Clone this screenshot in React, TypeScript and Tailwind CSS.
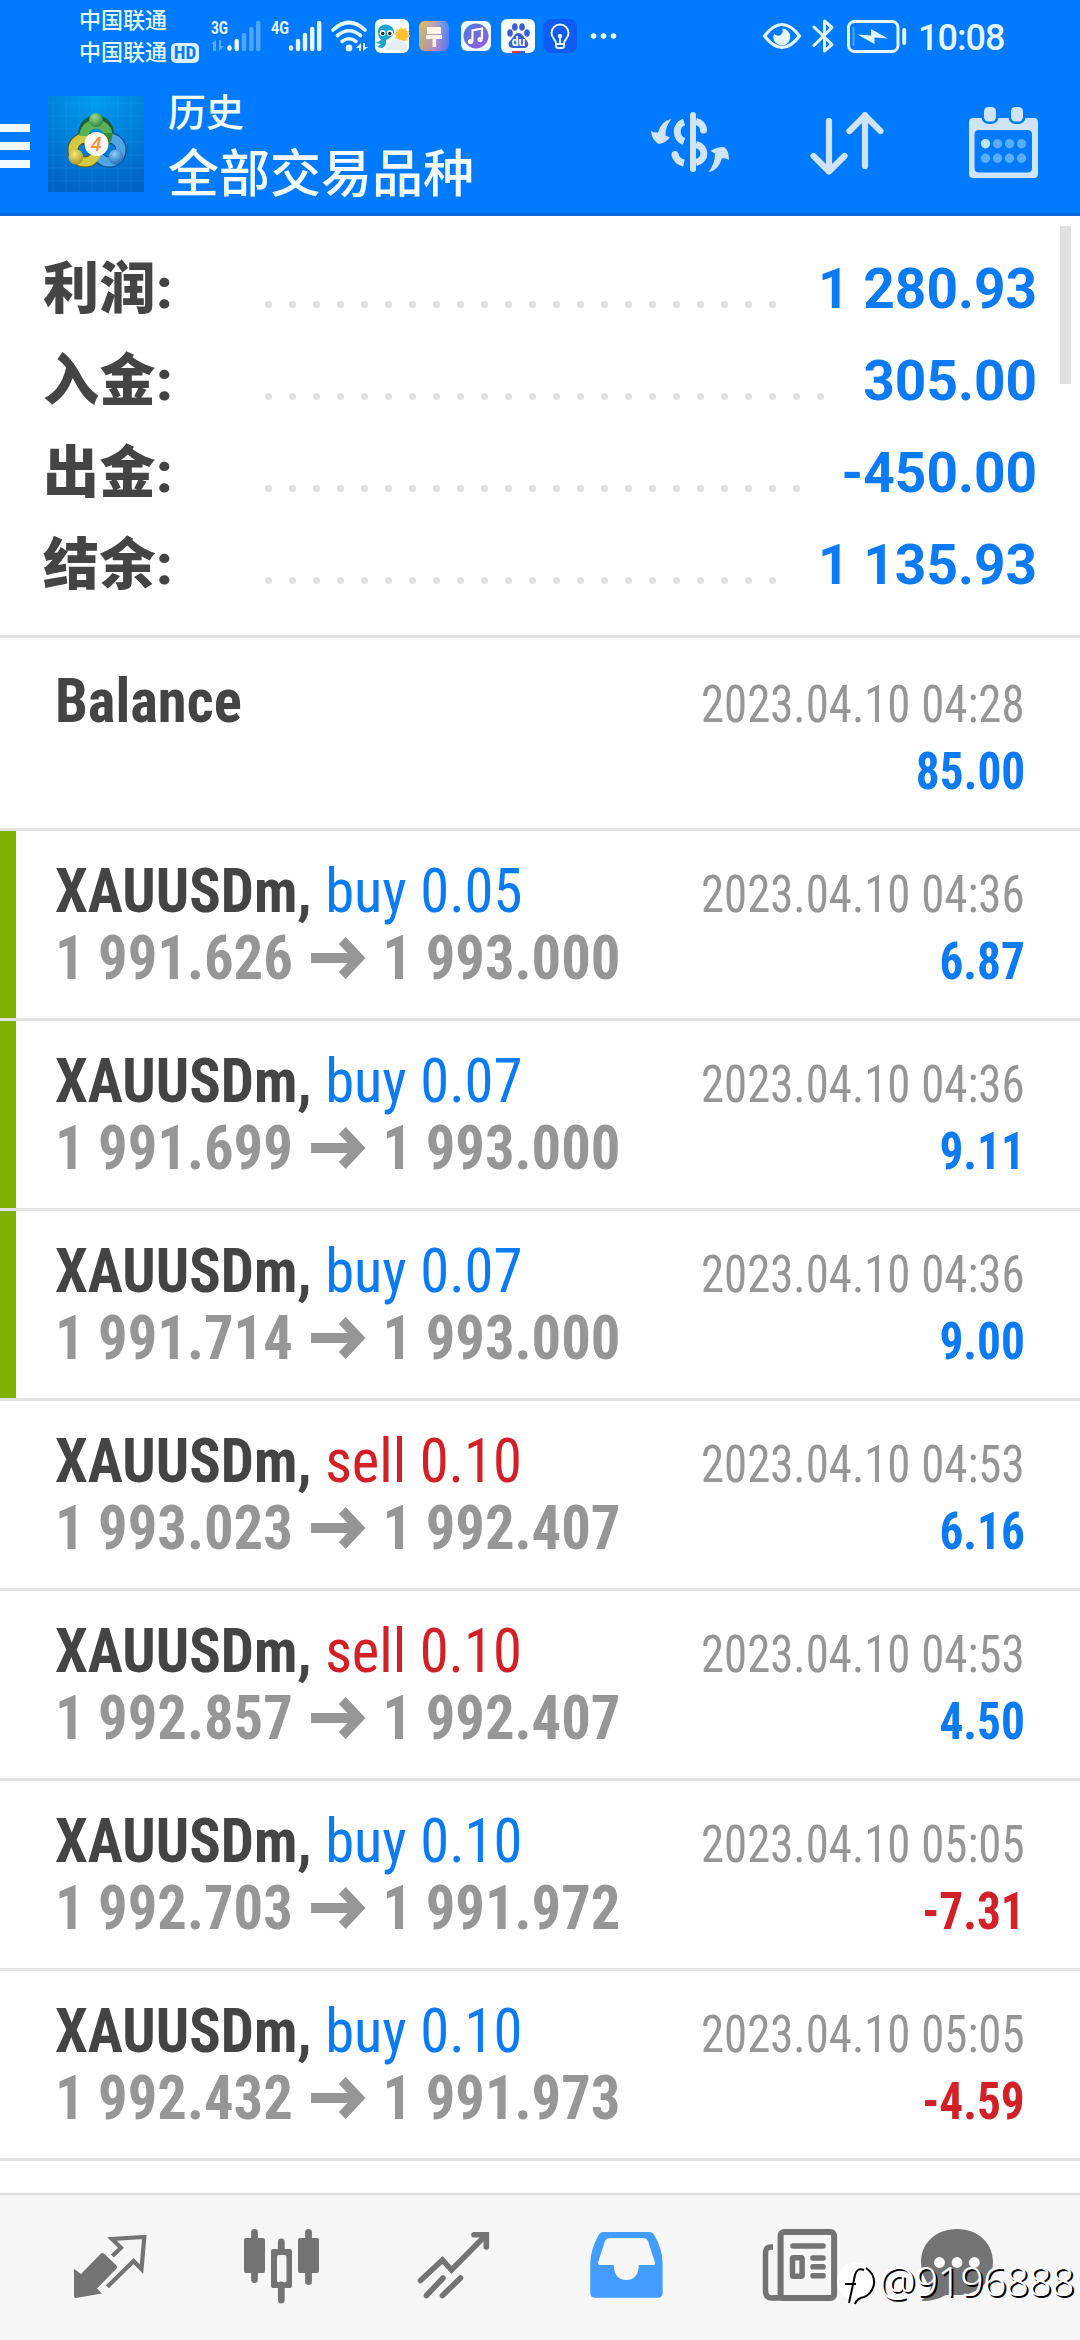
import { clsx } from "clsx";

type Deal = {
  symbol: string;
  side?: "buy" | "sell";
  volume?: string;
  open?: string;
  close?: string;
  time: string;
  profit: string;
  marked?: boolean;
};

const SUMMARY = [
  { label: "利润:", value: "1 280.93", dots: 22 },
  { label: "入金:", value: "305.00", dots: 24 },
  { label: "出金:", value: "-450.00", dots: 23 },
  { label: "结余:", value: "1 135.93", dots: 22 },
];

const DEALS: Deal[] = [
  { symbol: "XAUUSDm", side: "buy", volume: "0.05", open: "1 991.626", close: "1 993.000", time: "2023.04.10 04:36", profit: "6.87", marked: true },
  { symbol: "XAUUSDm", side: "buy", volume: "0.07", open: "1 991.699", close: "1 993.000", time: "2023.04.10 04:36", profit: "9.11", marked: true },
  { symbol: "XAUUSDm", side: "buy", volume: "0.07", open: "1 991.714", close: "1 993.000", time: "2023.04.10 04:36", profit: "9.00", marked: true },
  { symbol: "XAUUSDm", side: "sell", volume: "0.10", open: "1 993.023", close: "1 992.407", time: "2023.04.10 04:53", profit: "6.16" },
  { symbol: "XAUUSDm", side: "sell", volume: "0.10", open: "1 992.857", close: "1 992.407", time: "2023.04.10 04:53", profit: "4.50" },
  { symbol: "XAUUSDm", side: "buy", volume: "0.10", open: "1 992.703", close: "1 991.972", time: "2023.04.10 05:05", profit: "-7.31" },
  { symbol: "XAUUSDm", side: "buy", volume: "0.10", open: "1 992.432", close: "1 991.973", time: "2023.04.10 05:05", profit: "-4.59" },
];

export default function App() {
  return (
    <div className="relative flex h-[2340px] w-[1080px] flex-col overflow-hidden bg-white font-['Roboto','Noto_Sans_CJK_SC',sans-serif]">
      <header className="h-[216px] flex-none border-b-[3px] border-[#0a69d6] bg-[#007aff]">
        <StatusBar />
        <TitleBar />
      </header>

      <main className="relative flex-1 overflow-hidden">
        <section className="h-[422px] border-b-[3px] border-[#e3e3e3] pt-[27px] pr-[43px] pl-[43px]">
          {SUMMARY.map((s) => (
            <div key={s.label} className="flex h-[92px] items-baseline leading-[92px]">
              <span className="w-[222px] text-[56px] font-black tracking-[0.5px] text-[#444]">
                {s.label}
              </span>
              <span className="flex flex-1 gap-[17px]">
                {Array.from({ length: s.dots }, (_, i) => (
                  <i key={i} className="mb-px h-[7px] w-[7px] rounded-full bg-[#e0e0e0]" />
                ))}
              </span>
              <span className="text-[55px] font-bold whitespace-pre text-[#0a7af5]">
                {s.value}
              </span>
            </div>
          ))}
        </section>

        <div className="pt-[3px]">
          <DealRow
            deal={{ symbol: "Balance", time: "2023.04.10 04:28", profit: "85.00" }}
          />
          {DEALS.map((d, i) => (
            <DealRow key={i} deal={d} />
          ))}
        </div>

        <div className="absolute top-[10px] right-[9px] h-[158px] w-[11px] bg-[#e0e0e0]" />
      </main>

      <TabBar />
      <Watermark />
    </div>
  );
}

function DealRow({ deal }: { deal: Deal }) {
  const tone = deal.side === "sell" ? "text-[#d32026]" : "text-[#0a7af5]";
  return (
    <div className="flex h-[190px] border-b-[3px] border-[#e3e3e3] font-['Roboto_Condensed','Roboto',sans-serif] font-stretch-condensed">
      <div className={clsx("w-4 flex-none", deal.marked && "bg-[#80b000]")} />
      <div className="flex-1 pt-[26px] pr-[55px] pl-[39px] leading-[67px]">
        <div className="flex h-[67px] items-baseline justify-between">
          <p className="origin-left scale-x-[.945] text-[62px] whitespace-nowrap">
            <span className="font-bold text-[#444]">
              {deal.symbol}
              {deal.side && ","}
            </span>
            {deal.side && (
              <span className={tone}>
                {" "}
                {deal.side} {deal.volume}
              </span>
            )}
          </p>
          <p className="origin-right scale-x-[.9] text-[52px] text-[#969698]">{deal.time}</p>
        </div>
        <div className="flex h-[67px] items-baseline justify-between font-bold">
          <p className="flex origin-left scale-x-[.945] items-baseline text-[62px] text-[#969698]">
            {deal.open ? (
              <>
                <span>{deal.open}</span>
                <svg width="58" height="42" viewBox="0 0 58 42" className="mr-[18px] ml-[19px]">
                  <path d="M0 21H48M33 3.500L50.500 21L33 38.500" fill="none" stroke="currentColor" strokeWidth="10" />
                </svg>
                <span>{deal.close}</span>
              </>
            ) : (
              "\u00a0"
            )}
          </p>
          <p
            className={clsx(
              "origin-right scale-x-[.91] text-[52px]",
              deal.profit.startsWith("-") ? "text-[#d32026]" : "text-[#0a7af5]",
            )}
          >
            {deal.profit}
          </p>
        </div>
      </div>
    </div>
  );
}

function StatusBar() {
  return (
    <div className="flex h-[72px] pl-[79px] text-[#e6f6ff]">
      <div className="w-[125px] pt-[5px] text-[22px] leading-[32px] font-medium">
        <p>中国联通</p>
        <p className="flex items-center gap-1">
          中国联通
          <span className="flex h-5 w-7 items-center justify-center rounded-[5px] bg-[#d8f0ff] font-['Roboto_Condensed'] text-[19px] font-bold text-[#007aff]">
            HD
          </span>
        </p>
      </div>
      <svg width="168" height="72" viewBox="204 0 168 72" fill="currentColor">
        <text x="211" y="34" fontSize="19" fontWeight="700" textLength="17" lengthAdjust="spacingAndGlyphs">3G</text>
        <text x="271" y="34" fontSize="19" fontWeight="700" textLength="18" lengthAdjust="spacingAndGlyphs">4G</text>
        <g stroke="currentColor" strokeWidth="4.4" strokeLinecap="round">
          <path d="M229.5 47.5v1M236.7 41v8" />
          <path d="M244 35v14M251.4 29v20M258.3 23v26" opacity=".35" />
          <path d="M291 47.5v1M298 41v8M305 35v14M312.2 29v20M319.2 23v26" />
        </g>
        <path d="M211 44l5-4v11h-3v-7zM219 40v11l5-5h-3v-6z" opacity=".4" />
        <g fill="none" stroke="currentColor" strokeWidth="3.6" strokeLinecap="round">
          <path d="M333 30Q349 15 365 30M337.500 35.500Q349 26 360.500 35.500M342 41.500Q349 36 356 41.500" />
        </g>
        <circle cx="349" cy="48" r="3.4" />
        <path d="M356 48l5-5v8h-2v-3zM363 43v8l5-4h-3v-4z" />
      </svg>
      <svg width="248" height="72" viewBox="372 0 248 72">
        <defs>
          <linearGradient id="theme" x1="0" y1="0" x2="1" y2="0">
            <stop offset="0" stopColor="#fba030" />
            <stop offset=".5" stopColor="#e888b0" />
            <stop offset="1" stopColor="#4a7df8" />
          </linearGradient>
          <linearGradient id="themeTop" x1="0" y1="0" x2="1" y2="1">
            <stop offset="0" stopColor="#f7c948" stopOpacity=".7" />
            <stop offset=".4" stopColor="#5cc6e8" stopOpacity=".35" />
            <stop offset="1" stopColor="#5a60f0" stopOpacity=".3" />
          </linearGradient>
          <linearGradient id="music" x1="0" y1="0" x2="1" y2="1">
            <stop offset="0" stopColor="#4a7ed8" />
            <stop offset="1" stopColor="#9a5ae0" />
          </linearGradient>
        </defs>
        {/* weather */}
        <rect x="375" y="19" width="34" height="34" rx="6" fill="#f4fcff" />
        <circle cx="402" cy="35" r="6.500" fill="#fbc02d" stroke="#f7cf6a" strokeWidth="2.500" strokeDasharray="2 2" />
        <path d="M378 33a8 7 0 1 1 14 3q-3 3-6 4q1 6-4 8l-5-1l4-3l-5-1l5-3q-3-3-3-7z" fill="#1fa3d0" />
        <path d="M386 50q-1-7 5-7q3-7 9-3q6 0 7 6q0 4-3 4z" fill="#e6eef5" />
        <circle cx="382.500" cy="33" r="3" fill="#fff" />
        <circle cx="390" cy="33" r="3" fill="#fff" />
        <circle cx="382.800" cy="33.500" r="1.700" fill="#123" />
        <circle cx="389.800" cy="33.500" r="1.700" fill="#123" />
        {/* themes */}
        <rect x="419" y="21" width="30" height="30" rx="6" fill="url(#theme)" />
        <rect x="419" y="21" width="30" height="30" rx="6" fill="url(#themeTop)" />
        <path d="M427 27h14v7h-14zM426 35h16v4h-6v8h-3.500v-8h-6.500z" fill="#fff4e8" />
        {/* music */}
        <rect x="461" y="21" width="30" height="30" rx="6" fill="#eefaff" />
        <circle cx="476" cy="36" r="12.500" fill="url(#music)" />
        <path d="M472.500 41.500v-11l9.500-2v10.500" fill="none" stroke="#fff" strokeWidth="2.200" />
        <circle cx="470.500" cy="41.500" r="2.600" fill="#fff" />
        <circle cx="480" cy="39.500" r="2.600" fill="#fff" />
        {/* baidu */}
        <rect x="501" y="19" width="34" height="34" rx="6" fill="#f4fcff" />
        <g fill="#3c5fd0">
          <ellipse cx="510" cy="33" rx="2.800" ry="3.800" />
          <ellipse cx="514.800" cy="27" rx="2.800" ry="3.800" />
          <ellipse cx="522" cy="27" rx="2.800" ry="3.800" />
          <ellipse cx="527" cy="33" rx="2.800" ry="3.800" />
          <path d="M518.500 33c4 0 6 5 8.500 8s1 7-3 7h-11c-4 0-6-4-3-7s4.500-8 8.500-8z" />
        </g>
        <text x="518.500" y="46" fontSize="12" fontWeight="700" textAnchor="middle" fill="#fff">du</text>
        <path d="M512 51h7v2h-7z" fill="#e0304a" />
        <path d="M519 51h6v2h-6z" fill="#3c5fd0" />
        {/* bulb */}
        <rect x="543.500" y="19" width="33.500" height="34" rx="8" fill="#0f5bf3" />
        <g fill="none" stroke="#e6f6ff" strokeWidth="2">
          <path d="M556 43.500c0-4-4.500-5-4.500-10.500a8.500 8.500 0 0 1 17 0c0 5.500-4.500 6.500-4.500 10.500v2.500q0 2-2 2h-4q-2 0-2-2zM556 44h8M560 44v-8" />
        </g>
        <circle cx="560" cy="36" r="2.200" fill="#e6f6ff" />
        <g fill="#e6f6ff">
          <circle cx="593.500" cy="36" r="2.800" />
          <circle cx="603.500" cy="36" r="2.800" />
          <circle cx="613.500" cy="36" r="2.800" />
        </g>
      </svg>
      <svg width="150" height="72" viewBox="760 0 150 72" className="ml-[141px]" fill="none" stroke="currentColor">
        <path d="M763.500 36Q781 13 798.500 36Q781 59 763.500 36z" strokeWidth="3.200" />
        <path d="M781 28.500a8.500 8.500 0 1 1-8 5q4 4 7 1t1-6z" fill="currentColor" stroke="none" />
        <path d="M813 27L831 44.500L823.500 51V21L831 27.500L813 45.500" strokeWidth="3" strokeLinejoin="round" strokeLinecap="round" />
        <rect x="847.500" y="21.500" width="49.500" height="30" rx="6" strokeWidth="3" />
        <path d="M903.200 30v13" strokeWidth="4" strokeLinecap="round" />
        <path d="M852.500 27v19" strokeWidth="2" opacity=".35" />
        <path d="M856.500 34.500L870 35.500V29L887 38.500L873.500 37.500V44z" fill="currentColor" stroke="none" />
      </svg>
      <span className="ml-[7px] pt-[17px] text-[36px] leading-[42px] font-medium tracking-[-1px]">10:08</span>
    </div>
  );
}

function TitleBar() {
  return (
    <div className="flex h-[141px] text-[#cfe4fb]">
      <div className="flex w-[30px] flex-none flex-col gap-[10px] pt-[52px]">
        <span className="h-2 bg-[#f0faff]" />
        <span className="h-2 bg-[#f0faff]" />
        <span className="h-2 bg-[#f0faff]" />
      </div>
      <AppLogo />
      <div className="ml-[24px] w-[460px] font-medium text-[#f4fcff]">
        <p className="pt-[13px] text-[38px] leading-[56px]">历史</p>
        <p className="text-[51px] leading-[67px]">全部交易品种</p>
      </div>
      <svg width="82" height="141" viewBox="650 72 82 141" className="ml-[22px]">
        <g fill="none" stroke="currentColor" strokeWidth="7">
          <path d="M684 122C675 125 675 138 684 141.500" />
          <path d="M675 154.500C676 159 679 162 684 163" />
          <path d="M696 121.500C700.500 122.500 703.500 126 703.500 130" />
          <path d="M696 144.500C706.500 147 706.500 160 696 162.500" />
          <path d="M693 115v54" strokeWidth="6" strokeLinecap="round" />
        </g>
        <circle cx="675" cy="154.500" r="3.500" fill="currentColor" />
        <circle cx="703.500" cy="130" r="3.500" fill="currentColor" />
        <path d="M651 131Q655 133 658 132.500Q661 121 671.500 119Q665 127 665.500 135.500L670 137.500Q665 143 659 144Q652 141 651 131z" fill="currentColor" />
        <path d="M729 160Q725 157.500 722 158.500Q718 171 708.500 172Q715 164 715 153.500L710.500 151Q716 147 724 147Q729 150 729 160z" fill="currentColor" />
      </svg>
      <svg width="76" height="141" viewBox="808 72 76 141" className="ml-[77px]" fill="none" stroke="currentColor" strokeWidth="6.200" strokeLinecap="round" strokeLinejoin="round">
        <path d="M828 121v50M812.500 156L828 171.500L843.500 156" />
        <path d="M864 166v-51M848.500 131L864 115.500L879.500 131" />
      </svg>
      <svg width="72" height="141" viewBox="967 72 72 141" className="ml-[83px]">
        <path fillRule="evenodd" d="M972 118h61q4 0 4 4v52q0 4-4 4h-61q-4 0-4-4v-52q0-4 4-4zM978 130q-4.500 0-4.500 4.500v33.500q0 4.500 4.500 4.500h48.500q4.500 0 4.500-4.500v-33.500q0-4.500-4.500-4.500z" fill="currentColor" />
        <g fill="currentColor" stroke="#007aff" strokeWidth="5" paintOrder="stroke">
          <rect x="983" y="107" width="12" height="14.500" rx="4.500" />
          <rect x="1010" y="107" width="12" height="14.500" rx="4.500" />
        </g>
        {[143.7, 158.3].map((y) =>
          [984.5, 996.5, 1008.5, 1020.5].map((x, i) => (
            <circle key={`${x}-${y}`} cx={x} cy={y} r="4.700" fill={i === 0 && y < 150 ? "#c0e4ff" : "#5aacff"} />
          )),
        )}
      </svg>
    </div>
  );
}

function AppLogo() {
  return (
    <svg width="96" height="96" viewBox="0 0 96 96" className="mt-6 ml-[18px] flex-none">
      <defs>
        <radialGradient id="sky" cx=".5" cy="0" r="1">
          <stop offset="0" stopColor="#009ef0" />
          <stop offset="1" stopColor="#0064c4" />
        </radialGradient>
        <radialGradient id="green" cx=".4" cy=".3" r=".8">
          <stop offset="0" stopColor="#9fdc8c" />
          <stop offset="1" stopColor="#1f7a38" />
        </radialGradient>
        <radialGradient id="gold" cx=".4" cy=".3" r=".8">
          <stop offset="0" stopColor="#f3ea80" />
          <stop offset="1" stopColor="#a58c14" />
        </radialGradient>
        <radialGradient id="blue" cx=".4" cy=".3" r=".8">
          <stop offset="0" stopColor="#8fd0f8" />
          <stop offset="1" stopColor="#1560b0" />
        </radialGradient>
      </defs>
      <rect width="96" height="96" fill="url(#sky)" />
      <path d="M5 0v96M18 0v96M31 0v96M44 0v96M57 0v96M70 0v96M83 0v96M0 7h96M0 20h96M0 33h96M0 46h96M0 59h96M0 72h96M0 85h96" stroke="#3fb4ff" opacity=".16" />
      <g fill="none" strokeWidth="9">
        <circle cx="48" cy="37" r="12" stroke="#1c5c3a" strokeWidth="11.500" />
        <circle cx="37" cy="54" r="12" stroke="#5c5a28" strokeWidth="11.500" />
        <circle cx="61" cy="54" r="12" stroke="#0d4c92" strokeWidth="11.500" />
        <circle cx="61" cy="54" r="12" stroke="#4fa4e4" />
        <circle cx="37" cy="54" r="12" stroke="#d3c842" />
        <path d="M36 40a12 12 0 1 1 24 0" stroke="#58b257" />
        <path d="M60 37q0 8-5 11" stroke="#2f8a40" />
      </g>
      <circle cx="48" cy="24" r="7" fill="url(#green)" />
      <circle cx="28" cy="61" r="7.500" fill="url(#gold)" />
      <circle cx="68" cy="61" r="7.500" fill="url(#blue)" />
      <circle cx="48.500" cy="48" r="12" fill="#fbf7f2" />
      <text x="48" y="55" fontSize="20" fontWeight="500" fontStyle="italic" textAnchor="middle" fill="#f29238">4</text>
    </svg>
  );
}

function TabBar() {
  return (
    <nav className="flex h-[147px] flex-none gap-[92px] border-t-2 border-[#dedede] bg-[#f6f6f6] pt-[30px] pl-[70px] text-[#737373]">
      {/* quotes */}
      <svg width="80" height="84" viewBox="0 0 80 84" className="flex-none">
        <path d="M4 43.700L11 49L30.500 29Q32.600 27 34.500 29L46.500 40.500Q47.500 42 46.500 43.500L27 63.500L31.800 68.500L6 73Q4 73 4 71z" fill="currentColor" />
        <path d="M42.300 31L51 22.700L42 14L74.300 12L71.500 44.300L63.600 36L37.400 61.700" fill="none" stroke="currentColor" strokeWidth="4.200" />
      </svg>
      {/* chart */}
      <svg width="80" height="84" viewBox="0 0 80 84" className="flex-none" fill="currentColor">
        <path d="M12.500 7.500v47M66.500 7.500v49M39.300 17v9M39.300 60v15" stroke="currentColor" strokeWidth="6.800" strokeLinecap="round" />
        <rect x="2" y="13" width="21" height="35" rx="2" />
        <rect x="56" y="13" width="21" height="35" rx="2" />
        <path fillRule="evenodd" d="M31 24h17q2 0 2 2v35q0 2-2 2h-17q-2 0-2-2v-35q0-2 2-2zM37 30q-2 0-2 2v23.500q0 2 2 2h5.500q2 0 2-2v-23.500q0-2-2-2z" />
      </svg>
      {/* trade */}
      <svg width="80" height="84" viewBox="0 0 80 84" className="flex-none" fill="none" stroke="currentColor" strokeWidth="5.600" strokeLinecap="round">
        <path d="M6.500 55.500L28.500 35L37.500 45L72 10" />
        <path d="M60 9.700H72.300V22" />
        <path d="M12.500 70.500L29 53M28.500 70.500L46.500 53" />
      </svg>
      {/* history */}
      <svg width="80" height="84" viewBox="0 0 80 84" className="flex-none text-[#439cff]">
        <path fillRule="evenodd" d="M17 7H64Q66.500 7 68 9.500Q76.500 24 76.600 38V68Q76.600 72.700 72 72.700H9Q4.300 72.700 4.300 68V38Q4.500 24 13 9.500Q14.500 7 17 7zM24 13Q20.500 13 19 16L12 37.500Q11.500 40 14 40H27.700Q28 54.500 40.300 55Q52.600 54.500 52.800 40H67Q69.800 40 69 37.500L62 16Q60.500 13 57 13z" fill="currentColor" />
      </svg>
      {/* news */}
      <svg width="80" height="84" viewBox="0 0 80 84" className="ml-[2px] flex-none" fill="none" stroke="currentColor" strokeWidth="6">
        <rect x="20.600" y="7" width="53.500" height="66" rx="3.500" />
        <path d="M13 22H11Q5.500 22 5.500 28V66Q5.500 73 12 73H24M15.500 70V73" strokeWidth="5.500" />
        <path d="M33 21H63M53 33H63M53 41.800H63M53 50.800H63" strokeLinecap="round" strokeWidth="5.600" />
        <rect x="32.500" y="32.700" width="9.600" height="18.500" rx="1" strokeWidth="5.500" />
      </svg>
      {/* messages */}
      <svg width="80" height="84" viewBox="0 0 80 84" className="-ml-[15px] flex-none">
        <path d="M40 4C61 4 76 18 76 37S61 70 42 70C36 70 32 70 29 70Q18 76 6 76Q4 75.500 6 74Q13 68 14 62Q4 52 4 37C4 18 19 4 40 4z" fill="currentColor" />
        <g fill="#fff">
          <circle cx="22.500" cy="37.500" r="5.400" />
          <circle cx="40" cy="37.500" r="5.400" />
          <circle cx="57.300" cy="37.500" r="5.400" />
        </g>
      </svg>
    </nav>
  );
}

function Watermark() {
  return (
    <div className="absolute top-[2254px] left-[836px] flex text-white">
      <svg width="42" height="56" viewBox="0 0 42 56" className="mr-px">
        <path d="M20 8a19 19 0 1 1-6 37A19 19 0 0 1 20 8z" fill="#fff" />
        <path d="M28 16q-7-3-9 5l-6 28M9 30h11M30 14q9 6 8 16q-2 10-10 13q-7 1-9 7" fill="none" stroke="#000" strokeWidth="2" />
      </svg>
      <span className="font-['Noto_Sans',sans-serif] text-[41px] leading-[52px] font-light tracking-[-0.7px] text-shadow-[2px_2px_0_#000]">
        @9196888
      </span>
    </div>
  );
}
